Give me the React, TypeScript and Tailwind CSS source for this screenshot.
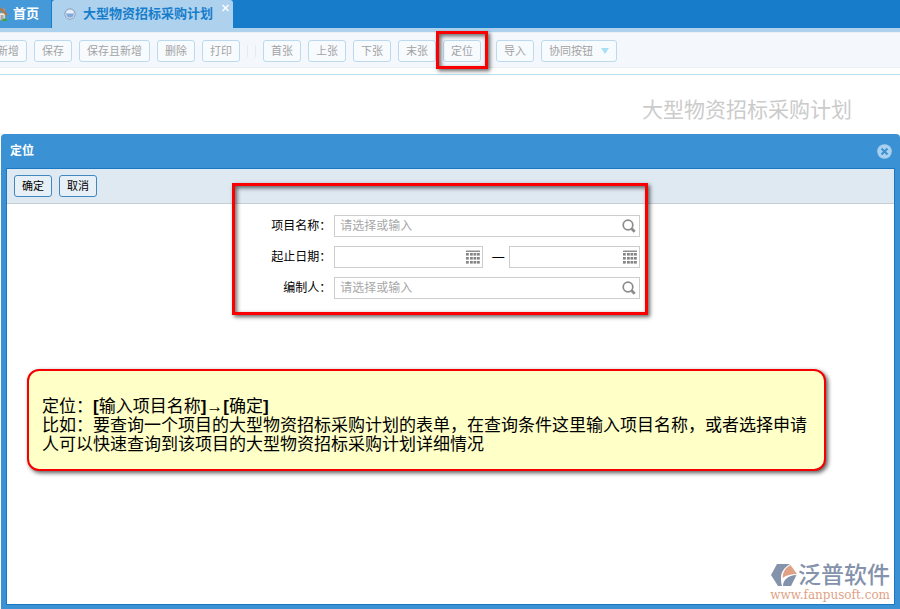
import { useState } from 'react'
import clsx from 'clsx'

const FONT = "font-['Liberation_Sans','Noto_Sans_CJK_SC',sans-serif]"

function HomeIcon() {
  return (
    <svg width="16" height="16" viewBox="0 0 16 16" aria-hidden="true">
      <path d="M3 7h10v7H3z" fill="#f3eee2" stroke="#a9a08c" strokeWidth="0.7" />
      <path d="M11 2.500h2v4h-2z" fill="#c98b55" />
      <path d="M1 9 8 2.500 15 9" fill="none" stroke="#b07a45" strokeWidth="2.2" />
      <path d="M8.500 9h3v5h-3z" fill="#a4a8ad" />
      <path d="M11 13c1.500-1 3.500-0.500 4.500 2H10z" fill="#3fa535" />
    </svg>
  )
}

function OrbIcon() {
  return (
    <svg width="12" height="12" viewBox="0 0 12 12" aria-hidden="true">
      <circle cx="6" cy="6" r="5.2" fill="#d3e0f2" stroke="#8f9fba" strokeWidth="1" />
      <circle cx="6" cy="6" r="3.600" fill="#7fa8dd" />
      <path d="M2.500 5.500a3.500 3.500 0 0 1 7 0z" fill="#e6effa" />
    </svg>
  )
}

function SearchIcon() {
  return (
    <svg width="14" height="14" viewBox="0 0 14 14" aria-hidden="true">
      <circle cx="6" cy="6" r="4.800" fill="none" stroke="#8c8c8c" strokeWidth="1.700" />
      <path d="m9.500 9.500 3.200 3.200" stroke="#8c8c8c" strokeWidth="2.800" />
    </svg>
  )
}

function CalendarIcon() {
  return (
    <svg width="14" height="14" viewBox="0 0 14 14" aria-hidden="true">
      <path d="M0 0.500h14v1.500H0z" fill="#8f8f8f" />
      {[3, 7, 11].map((y) =>
        [0, 4, 7.500, 11].map((x) => <rect key={`${x}-${y}`} x={x} y={y} width="2.800" height="2.600" fill="#858585" />),
      )}
    </svg>
  )
}

function RedFrame({ className }: { className: string }) {
  return (
    <div
      aria-hidden="true"
      className={clsx(
        'pointer-events-none absolute border-[3px] border-[#fb0000] shadow-[2px_2px_4px_rgba(0,0,0,0.6),inset_2px_2px_4px_rgba(0,0,0,0.6)]',
        className,
      )}
    />
  )
}

function ToolButton({ label }: { label: string }) {
  return (
    <button className="h-[22px] shrink-0 rounded-[3px] border border-[#bcd9ee] bg-[#f8fbfe] px-[7px] text-[11px] leading-5 whitespace-nowrap text-[#a3a3a3]">
      {label}
    </button>
  )
}

const FIELD =
  'block h-[22px] w-full min-w-0 border border-[#cdcdcd] bg-white pl-[5px] text-xs text-black outline-none placeholder:text-[#a8a8a8]'

function LookupField({ id, label }: { id: string; label: string }) {
  const [value, setValue] = useState('')
  return (
    <div className="flex items-center gap-[3px]">
      <label htmlFor={id} className="w-[67px] shrink-0 text-right text-xs whitespace-nowrap">
        {label}
      </label>
      <div className="relative flex-1">
        <input id={id} value={value} onChange={(e) => setValue(e.target.value)} placeholder="请选择或输入" className={FIELD} />
        <button type="button" aria-label="查找" className="absolute top-1 right-1">
          <SearchIcon />
        </button>
      </div>
    </div>
  )
}

function DateField({ id, label, className }: { id: string; label?: string; className: string }) {
  return (
    <div className={clsx('relative', className)}>
      <input id={id} aria-label={label} className={FIELD} />
      <button type="button" aria-label="选择日期" className="absolute top-1 right-[3px]">
        <CalendarIcon />
      </button>
    </div>
  )
}

function TabBar() {
  return (
    <nav className="border-b-4 border-[#aed2ee] bg-[#177dcb]">
      <div className="flex h-7">
        <a href="#home" className="flex items-center overflow-hidden bg-[#4699d8] pr-3 text-[13px] font-bold text-white">
          <span className="mr-[5px] -ml-2">
            <HomeIcon />
          </span>
          首页
        </a>
        <div className="relative ml-px flex items-center rounded-t-[3px] bg-[#aed2ee] pr-5 pl-3">
          <OrbIcon />
          <a href="#plan" className="ml-[7px] text-[13px] font-bold text-[#177dcb]">
            大型物资招标采购计划
          </a>
          <button aria-label="关闭" className="absolute top-1 right-1 text-white">
            <svg width="7" height="8" viewBox="0 0 7 8">
              <path d="m0.500 1 6 6m0-6-6 6" stroke="currentColor" strokeWidth="1.400" />
            </svg>
          </button>
        </div>
      </div>
    </nav>
  )
}

function Toolbar() {
  return (
    <div className="border-y border-[#e9eff4] bg-[#f4f8fc]">
      <div className="-ml-[11px] flex items-center gap-[7px] pt-[7px] pb-[5px]">
        <ToolButton label="新增" />
        <ToolButton label="保存" />
        <ToolButton label="保存且新增" />
        <ToolButton label="删除" />
        <ToolButton label="打印" />
        <span className="h-3 w-[9px] border-x border-[#e6ebef]" />
        <ToolButton label="首张" />
        <ToolButton label="上张" />
        <ToolButton label="下张" />
        <ToolButton label="末张" />
        <div className="relative mr-2 flex">
          <ToolButton label="定位" />
          <RedFrame className="-inset-x-[7px] -top-[9px] -bottom-[7px]" />
        </div>
        <ToolButton label="导入" />
        <button className="flex h-[22px] items-center gap-2 rounded-[3px] border border-[#bcd9ee] bg-[#f8fbfe] px-[7px] text-[11px] whitespace-nowrap text-[#a3a3a3]">
          协同按钮
          <svg width="8" height="6" viewBox="0 0 8 6" aria-hidden="true">
            <path d="M0 0h8L4 6z" fill="#a5e0f5" />
          </svg>
        </button>
      </div>
    </div>
  )
}

function BrandLogo() {
  return (
    <div className="absolute right-1 bottom-px flex flex-col items-end">
      <div className="flex items-center gap-px">
        <svg width="26" height="22" viewBox="0 0 26 22" aria-hidden="true">
          <path d="M6 0h13C13 4 10 8 10 13c0 3 0 6 1 9H7L0 11z" fill="#8492ac" />
          <path d="M11.500 14C12 8 14 4 19.500 1L26 10c-6 0-10 1-14.500 4z" fill="#e0a287" />
          <path d="M12 22c0-6 5-10.500 13.500-11L20 22z" fill="#8492ac" />
        </svg>
        <span className="text-[23px] leading-6 font-medium text-[#8492ac]">泛普软件</span>
      </div>
      <a href="#fanpusoft" className="font-['DejaVu_Serif',serif] text-xs text-[#dfa286]">
        www.fanpusoft.com
      </a>
    </div>
  )
}

function LocateDialog() {
  return (
    <section role="dialog" aria-label="定位" className="ml-px flex flex-1 flex-col rounded-t-[4px] bg-[#3a92d4] px-[5px] pb-1">
      <header className="flex h-[34px] items-center justify-between pr-[3px] pl-1">
        <h2 className="text-xs font-bold text-white">定位</h2>
        <button aria-label="关闭">
          <svg width="15" height="15" viewBox="0 0 15 15">
            <circle cx="7.500" cy="7.500" r="7.300" fill="#a9d0ee" />
            <path d="m4.500 4.500 6 6m0-6-6 6" stroke="#3a92d4" strokeWidth="2" />
          </svg>
        </button>
      </header>
      <div className="relative flex flex-1 flex-col border border-[#1a78c2] bg-white">
        <div className="flex h-[35px] items-center gap-[7px] border-b border-[#c8cdd2] bg-[#dfe9f2] px-[7px]">
          <button className="h-[22px] rounded-[3px] border border-[#3f88c0] bg-[#e8f0f7] px-[7px] text-[11px] leading-5 text-black">确定</button>
          <button className="h-[22px] rounded-[3px] border border-[#3f88c0] bg-[#e8f0f7] px-[7px] text-[11px] leading-5 text-black">取消</button>
        </div>

        <form className="relative mt-[11px] ml-[29%] flex w-[376px] flex-col gap-[9px]">
          <LookupField id="project" label="项目名称：" />
          <div className="flex items-center gap-[3px]">
            <label htmlFor="start" className="w-[67px] shrink-0 text-right text-xs whitespace-nowrap">
              起止日期：
            </label>
            <DateField id="start" className="w-[149px]" />
            <span className="w-5 pl-1 text-center text-xs">—</span>
            <DateField id="end" label="结束日期" className="flex-1" />
          </div>
          <LookupField id="author" label="编制人：" />
          <RedFrame className="-top-8 -right-2 -bottom-4 -left-8" />
        </form>

        <div className="mt-[70px] mr-[68px] ml-5 rounded-xl border-2 border-[#f40000] bg-[#ffffc8] pt-[26px] pr-[14px] pb-[15px] pl-[13px] text-[17px] leading-[19px] text-black shadow-[2px_2px_4px_rgba(0,0,0,0.65)]">
          <p>
            定位：<b>[</b>输入项目名称<b>]</b>→<b>[</b>确定<b>]</b>
          </p>
          <p>比如：要查询一个项目的大型物资招标采购计划的表单，在查询条件这里输入项目名称，或者选择申请人可以快速查询到该项目的大型物资招标采购计划详细情况</p>
        </div>

        <BrandLogo />
      </div>
    </section>
  )
}

export default function App() {
  return (
    <main className={clsx('flex min-h-screen flex-col overflow-hidden bg-white', FONT)}>
      <TabBar />
      <Toolbar />
      <div className="mt-[6px] border-t border-[#b9dff0] px-12 pt-5 pb-[9px]">
        <h1 className="text-right text-[21px] leading-[30px] text-[#cbcbcb]">大型物资招标采购计划</h1>
      </div>
      <LocateDialog />
    </main>
  )
}
